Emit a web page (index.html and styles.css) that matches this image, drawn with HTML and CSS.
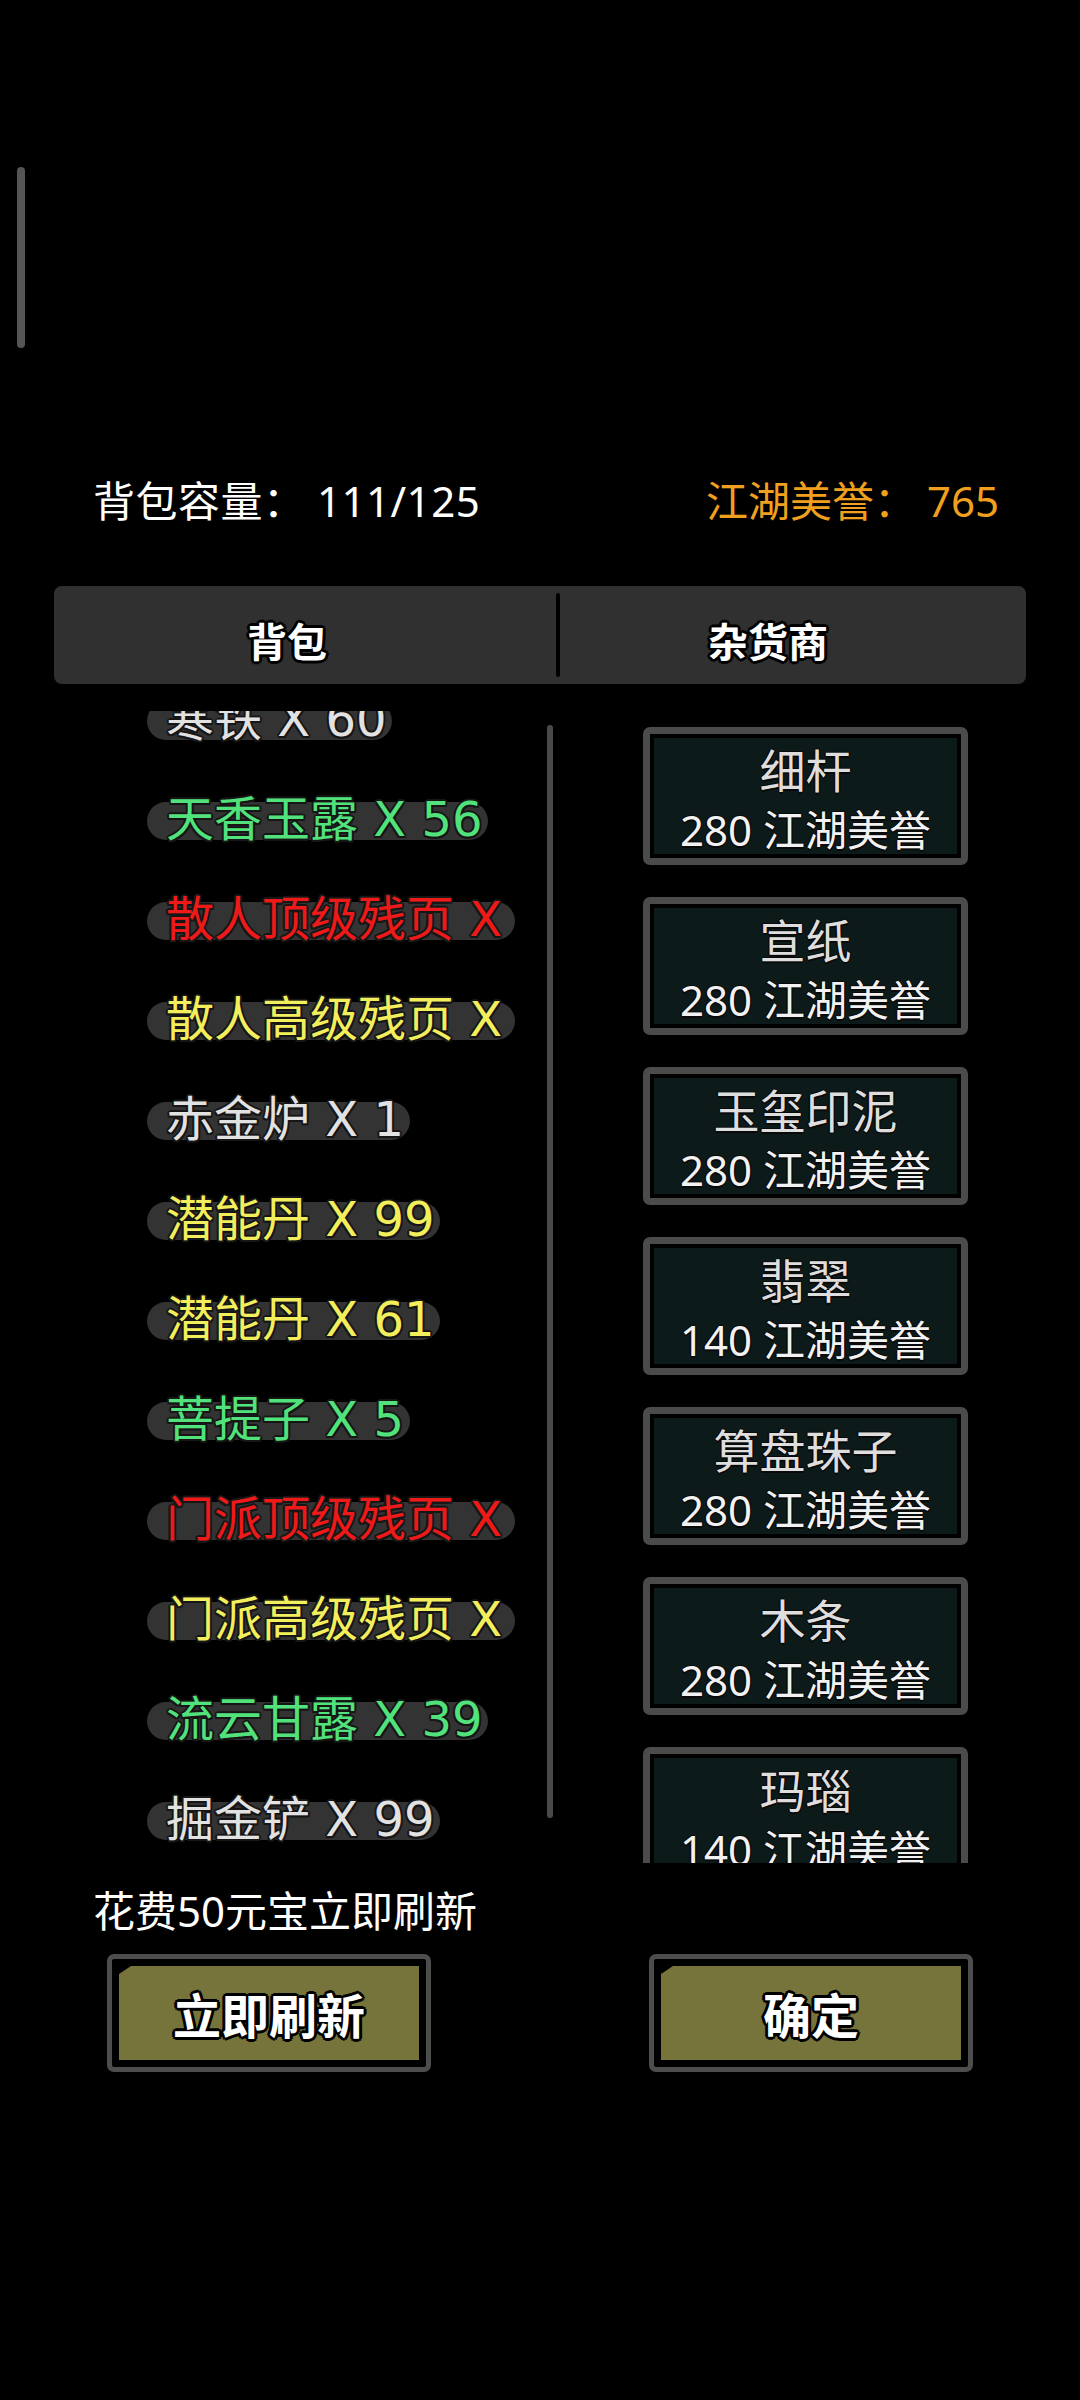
FILE: index.html
```html
<!DOCTYPE html>
<html lang="zh-CN">
<head>
<meta charset="utf-8">
<title>杂货商</title>
<link rel="stylesheet" href="styles.css">
</head>
<body>
<div class="page">
  <div class="scrollind"></div>

  <div class="stats">
    <span class="cap">背包容量：&nbsp;111/125</span>
    <span class="fame">江湖美誉：&nbsp;765</span>
  </div>

  <div class="tabs">
    <div class="tab tab-bag"><span class="tab-text">背包</span></div>
    <div class="tab-div"></div>
    <div class="tab tab-shop"><span class="tab-text">杂货商</span></div>
  </div>

  <div class="main">
    <div class="bag">
      <div class="bag-list">
        <div class="row"><span class="pill c-white">寒铁 X 60</span></div>
        <div class="row"><span class="pill c-green">天香玉露 X 56</span></div>
        <div class="row"><span class="pill c-red">散人顶级残页 X 3</span></div>
        <div class="row"><span class="pill c-yellow">散人高级残页 X 8</span></div>
        <div class="row"><span class="pill c-white">赤金炉 X 1</span></div>
        <div class="row"><span class="pill c-yellow">潜能丹 X 99</span></div>
        <div class="row"><span class="pill c-yellow">潜能丹 X 61</span></div>
        <div class="row"><span class="pill c-green">菩提子 X 5</span></div>
        <div class="row"><span class="pill c-red">门派顶级残页 X 2</span></div>
        <div class="row"><span class="pill c-yellow">门派高级残页 X 6</span></div>
        <div class="row"><span class="pill c-green">流云甘露 X 39</span></div>
        <div class="row"><span class="pill c-white">掘金铲 X 99</span></div>
        <div class="row"><span class="pill c-white">寒铁 X 12</span></div>
      </div>
    </div>
    <div class="bag-scroll"></div>
    <div class="shop">
      <div class="card"><div class="card-in"><div class="name">细杆</div><div class="price">280 江湖美誉</div></div></div>
      <div class="card"><div class="card-in"><div class="name">宣纸</div><div class="price">280 江湖美誉</div></div></div>
      <div class="card"><div class="card-in"><div class="name">玉玺印泥</div><div class="price">280 江湖美誉</div></div></div>
      <div class="card"><div class="card-in"><div class="name">翡翠</div><div class="price">140 江湖美誉</div></div></div>
      <div class="card"><div class="card-in"><div class="name">算盘珠子</div><div class="price">280 江湖美誉</div></div></div>
      <div class="card"><div class="card-in"><div class="name">木条</div><div class="price">280 江湖美誉</div></div></div>
      <div class="card"><div class="card-in"><div class="name">玛瑙</div><div class="price">140 江湖美誉</div></div></div>
      <div class="card"><div class="card-in"><div class="name">墨锭</div><div class="price">280 江湖美誉</div></div></div>
    </div>
  </div>

  <div class="cost">花费50元宝立即刷新</div>

  <div class="btns">
    <div class="btn"><div class="btn-fill"><span class="btn-text">立即刷新</span></div></div>
    <div class="btn"><div class="btn-fill"><span class="btn-text">确定</span></div></div>
  </div>
</div>
</body>
</html>
```

FILE: styles.css
```css
* { box-sizing: border-box; }

html, body {
  margin: 0;
  padding: 0;
  background: #000;
}

body {
  font-family: "Noto Sans", "Noto Sans CJK SC", sans-serif;
  color: #fff;
}

.page {
  width: 1080px;
  height: 2400px;
  overflow: hidden;
  background: #000;
}

.scrollind {
  margin-left: 17px;
  margin-top: 167px;
  width: 8px;
  height: 181px;
  border-radius: 4px;
  background: #555;
}

.stats {
  margin-top: 128px;
  padding: 0 81px 0 93px;
  display: flex;
  justify-content: space-between;
  font-size: 42px;
  line-height: 50px;
  white-space: nowrap;
}

.cap { color: #ffffff; letter-spacing: 0.5px; }
.fame { color: #f0a01e; }

.tabs {
  margin-top: 60px;
  margin-left: 54px;
  width: 972px;
  height: 98px;
  background: #303030;
  border-radius: 8px;
  display: flex;
}

.tab {
  display: flex;
  align-items: center;
  justify-content: center;
  padding-top: 10px;
  height: 98px;
}

.tab-bag { width: 502px; padding-right: 36px; }
.tab-shop { flex: 1; padding-right: 50px; }

.tab-div {
  width: 4px;
  height: 84px;
  margin-top: 7px;
  background: #000;
  border-radius: 2px;
}

.tab-text, .btn-text {
  font-family: "Noto Sans CJK SC", sans-serif;
  font-weight: 700;
  color: #fff;
  text-shadow:
    3px 0 0 #000, -3px 0 0 #000, 0 3px 0 #000, 0 -3px 0 #000,
    2px 2px 0 #000, -2px 2px 0 #000, 2px -2px 0 #000, -2px -2px 0 #000,
    0 0 3px #000;
}

.tab-text { font-size: 40px; line-height: 50px; }

.main {
  margin-top: 27px;
  height: 1152px;
  display: flex;
  overflow: hidden;
}

.bag {
  width: 547px;
  flex-shrink: 0;
  overflow: hidden;
}

.bag-list { margin-top: -40px; }

.row {
  height: 100px;
  display: flex;
  align-items: center;
  padding-left: 147px;
  overflow: hidden;
}

.pill {
  display: block;
  max-width: 368px;
  height: 38px;
  overflow: visible;
  clip-path: inset(-20px 0 -20px 0);
  white-space: nowrap;
  padding: 0 6px 0 19px;
  border-radius: 19px;
  background: #333;
  font-family: "DejaVu Sans", "Noto Sans CJK SC", sans-serif;
  font-size: 48px;
  line-height: 35px;
  text-shadow:
    2px 0 0 #161616, -2px 0 0 #161616, 0 2px 0 #161616, 0 -2px 0 #161616,
    1.5px 1.5px 0 #161616, -1.5px 1.5px 0 #161616, 1.5px -1.5px 0 #161616, -1.5px -1.5px 0 #161616;
}

.c-white { color: #e2e2e2; }
.c-green { color: #52e27c; }
.c-red { color: #ee1a1a; }
.c-yellow { color: #f3ee5c; }

.bag-scroll {
  width: 6px;
  height: 1093px;
  margin-top: 14px;
  flex-shrink: 0;
  border-radius: 3px;
  background: #4a4a4a;
}

.shop {
  flex: 1;
  padding-left: 90px;
  padding-top: 16px;
  display: flex;
  flex-direction: column;
  gap: 32px;
}

.card {
  width: 325px;
  height: 138px;
  flex-shrink: 0;
  border: 7px solid #4b4b4b;
  border-radius: 7px;
  padding: 4px;
  background: #000;
}

.card-in {
  height: 116px;
  background: #0c1a1a;
  text-align: center;
  padding-top: 2px;
  color: #dedede;
  font-family: "Noto Sans", "Noto Sans CJK SC", sans-serif;
  white-space: nowrap;
  text-shadow:
    1.5px 0 0 #0a0a0a, -1.5px 0 0 #0a0a0a, 0 1.5px 0 #0a0a0a, 0 -1.5px 0 #0a0a0a;
}

.name { font-size: 46px; line-height: 60px; }
.price { font-size: 42px; line-height: 60px; color: #f2f2f2; }

.cost {
  margin-top: 23px;
  margin-left: 93px;
  font-size: 42px;
  line-height: 50px;
  color: #fff;
}

.btns {
  margin-top: 18px;
  padding-left: 107px;
  display: flex;
  gap: 218px;
}

.btn {
  width: 324px;
  height: 118px;
  border: 5px solid #4d4d4d;
  border-radius: 7px;
  padding: 7px;
  background: #000;
}

.btn-fill {
  height: 100%;
  background: #77743b;
  clip-path: polygon(12px 0, 100% 0, 100% 100%, 0 100%, 0 8px);
  display: flex;
  align-items: center;
  justify-content: center;
}

.btn-text { font-size: 48px; line-height: 56px; font-weight: 600; }
```
